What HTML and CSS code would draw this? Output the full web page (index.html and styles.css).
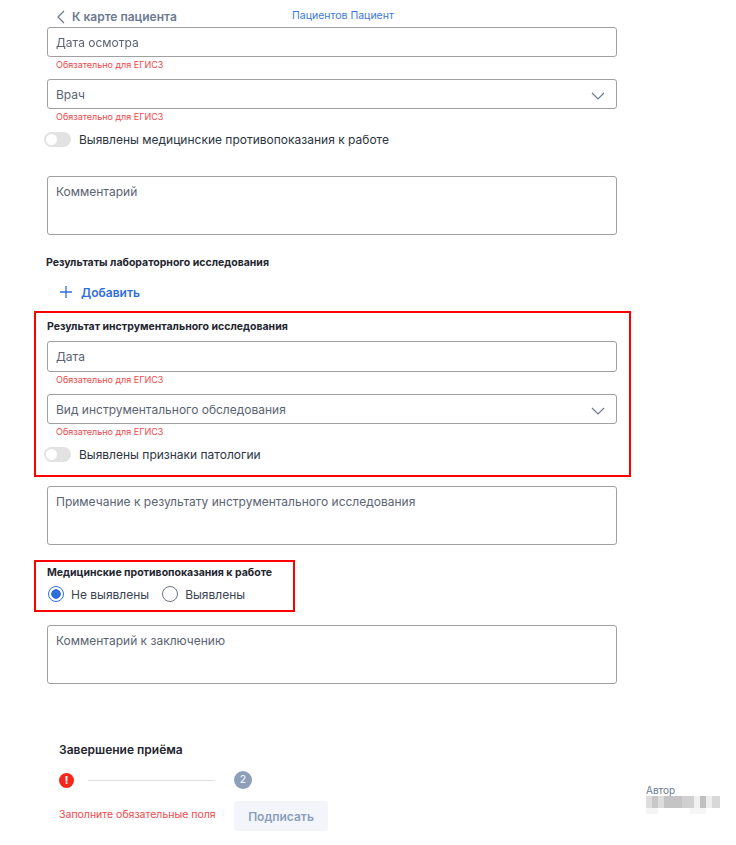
FILE: index.html
```html
<!DOCTYPE html>
<html lang="ru">
  <head>
    <meta charset="UTF-8" />
    <meta name="viewport" content="width=device-width, initial-scale=1.0" />
    <title>Осмотр</title>
    <link rel="stylesheet" href="styles.css">
  </head>
  <body>
    <header class="top-bar">
      <a class="back-link">
        <svg class="back-icon" width="10" height="14" viewBox="0 0 10 14"><path d="M8 1 2 7l6 6" fill="none" stroke="#6b7a90" stroke-width="1.3"/></svg>
        К карте пациента
      </a>
      <a class="patient-link">Пациентов Пациент</a>
    </header>

    <main class="form">
      <div class="field field-first">Дата осмотра</div>
      <p class="hint">Обязательно для ЕГИСЗ</p>

      <div class="field field-select">
        Врач
        <svg class="chevron" width="14" height="8" viewBox="0 0 14 8"><path d="M1 1l6 6 6-6" fill="none" stroke="#6b7a90" stroke-width="1.2"/></svg>
      </div>
      <p class="hint">Обязательно для ЕГИСЗ</p>

      <div class="toggle-row toggle-row-first">
        <span class="toggle"><span class="knob"></span></span>
        Выявлены медицинские противопоказания к работе
      </div>

      <div class="field field-area area-first">Комментарий</div>

      <h2 class="section-title title-lab">Результаты лабораторного исследования</h2>
      <a class="add-link">
        <svg width="14" height="14" viewBox="0 0 14 14"><path d="M7 1v12M1 7h12" fill="none" stroke="#2f6fdc" stroke-width="1.3"/></svg>
        Добавить
      </a>

      <section class="marked marked-instrument">
        <h2 class="section-title">Результат инструментального исследования</h2>
        <div class="field field-date">Дата</div>
        <p class="hint">Обязательно для ЕГИСЗ</p>
        <div class="field field-select">
          Вид инструментального обследования
          <svg class="chevron" width="14" height="8" viewBox="0 0 14 8"><path d="M1 1l6 6 6-6" fill="none" stroke="#6b7a90" stroke-width="1.2"/></svg>
        </div>
        <p class="hint">Обязательно для ЕГИСЗ</p>
        <div class="toggle-row">
          <span class="toggle"><span class="knob"></span></span>
          Выявлены признаки патологии
        </div>
      </section>

      <div class="field field-area area-note">Примечание к результату инструментального исследования</div>

      <section class="marked marked-radio">
        <h2 class="section-title">Медицинские противопоказания к работе</h2>
        <div class="radio-row">
          <span class="radio radio-on"></span>
          <span class="radio-label">Не выявлены</span>
          <span class="radio"></span>
          <span class="radio-label">Выявлены</span>
        </div>
      </section>

      <div class="field field-area area-conclusion">Комментарий к заключению</div>
    </main>

    <footer class="finish">
      <div class="finish-main">
        <h3 class="finish-title">Завершение приёма</h3>
        <div class="finish-grid">
          <div class="steps">
            <span class="step-alert">!</span>
            <span class="step-line"></span>
          </div>
          <span class="step-num">2</span>
          <span class="error-text">Заполните обязательные поля</span>
          <button class="sign-btn">Подписать</button>
        </div>
      </div>
      <div class="author">
        <span class="author-label">Автор</span>
        <div class="author-blur"></div>
      </div>
    </footer>
  </body>
</html>
```

FILE: styles.css
```css
* {
  box-sizing: border-box;
}
body {
  margin: 0;
  background: #fff;
  font-family: Inter, "Noto Sans", sans-serif;
  color: #2b3440;
  height: 845px;
  overflow: hidden;
}
.top-bar {
  position: fixed;
  top: 0;
  left: 0;
  width: 100%;
  height: 33px;
  background: #fff;
  display: flex;
  align-items: center;
  padding-left: 56px;
}
.back-link {
  display: flex;
  align-items: center;
  gap: 6px;
  width: 236px;
  font-size: 12px;
  font-weight: 600;
  color: #6b7a90;
}
.patient-link {
  font-size: 10.5px;
  color: #3c78d8;
  margin-top: -3px;
}
.form {
  width: 617px;
  margin-left: 47px;
  padding-top: 27px;
}
.field {
  position: relative;
  border: 1px solid #a0a0a0;
  border-radius: 3px;
  font-size: 12px;
  color: #5a6472;
  padding: 0 8px;
  height: 30px;
  display: flex;
  align-items: center;
  width: 570px;
}
.field-area {
  height: 59px;
  align-items: flex-start;
  padding-top: 7px;
}
.field-date {
  height: 31px;
}
.chevron {
  position: absolute;
  right: 11px;
  top: 12px;
}
.hint {
  margin: 2px 0 0 9px;
  height: 20px;
  font-size: 9px;
  line-height: 12px;
  color: #f0484a;
}
.toggle-row {
  display: flex;
  align-items: center;
  gap: 8px;
  margin-left: -3px;
  font-size: 12px;
  color: #2b3440;
  height: 16px;
}
.toggle {
  width: 27px;
  height: 15px;
  border-radius: 8px;
  background: #e2e2e2;
  padding: 2px;
  display: block;
}
.knob {
  display: block;
  width: 11px;
  height: 11px;
  border-radius: 50%;
  background: #fff;
}
.area-first {
  margin-top: 29px;
}
.section-title {
  margin: 0;
  font-size: 10.5px;
  line-height: 14px;
  font-weight: 700;
  color: #1f2630;
}
.title-lab {
  margin-top: 21px;
  margin-left: -1px;
}
.add-link {
  display: flex;
  align-items: center;
  gap: 8px;
  margin: 14px 0 0 12px;
  height: 16px;
  font-size: 12px;
  font-weight: 600;
  color: #2f6fdc;
}
.marked {
  border: 2px solid #f00;
  margin-left: -13px;
}
.marked-instrument {
  width: 597px;
  margin-top: 11px;
  height: 166px;
  padding: 7px 0 0 11px;
}
.marked-instrument .section-title {
  margin-bottom: 7px;
}
.area-note {
  margin-top: 9px;
}
.marked-radio {
  width: 261px;
  height: 52px;
  margin-top: 15px;
  padding: 4px 0 0 11px;
}
.radio-row {
  display: flex;
  align-items: center;
  margin-top: 6px;
  font-size: 12px;
  color: #3a4350;
}
.radio {
  width: 16px;
  height: 16px;
  border-radius: 50%;
  border: 1.5px solid #6c7280;
  margin-right: 7px;
}
.radio-on {
  border-color: #2f6fdc;
  background: radial-gradient(circle, #2f6fdc 0 4.5px, #fff 5px);
  margin-left: 1px;
}
.radio-label {
  margin-right: 13px;
}
.area-conclusion {
  margin-top: 13px;
}
.finish {
  display: flex;
  padding: 58px 0 0 59px;
}
.finish-main {
  width: 587px;
}
.finish-title {
  margin: 0;
  font-size: 12px;
  line-height: 16px;
  font-weight: 600;
  color: #1f2630;
}
.finish-grid {
  display: grid;
  grid-template-columns: 175px auto;
  grid-template-rows: 18px 30px;
  row-gap: 12px;
  margin-top: 13px;
  justify-items: start;
  align-items: center;
}
.steps {
  display: flex;
  align-items: center;
  gap: 14px;
}
.step-alert {
  width: 15px;
  height: 15px;
  border-radius: 50%;
  background: #f5261c;
  color: #fff;
  font-size: 10px;
  font-weight: 800;
  line-height: 15px;
  text-align: center;
}
.step-line {
  width: 127px;
  height: 1px;
  background: #dcdfe3;
}
.step-num {
  width: 18px;
  height: 18px;
  border-radius: 50%;
  background: #8c9fbb;
  color: #fff;
  font-size: 10.5px;
  line-height: 18px;
  text-align: center;
}
.error-text {
  font-size: 10.5px;
  color: #f0484a;
  margin-top: -4px;
}
.sign-btn {
  width: 94px;
  height: 30px;
  border: 0;
  border-radius: 3px;
  background: #f2f5fa;
  color: #8c9fbb;
  font-family: inherit;
  font-size: 12px;
  font-weight: 600;
}
.author {
  padding-top: 42px;
}
.author-label {
  display: block;
  font-size: 10px;
  line-height: 12px;
  color: #6b7a90;
}
.author-blur {
  width: 74px;
  height: 18px;
  background:
    linear-gradient(to right, #ddd 0 6px, #c8c8c8 6px 12px, #ddd 12px 18px, #c4c4c4 18px 36px, #d0d0d0 36px 48px, #f0f0f0 48px 54px, #c0c0c0 54px 60px, #eee 60px 66px, #d8d8d8 66px 74px) top / 100% 12px no-repeat,
    linear-gradient(to right, #f5f5f5 0 12px, #fff 12px 44px, #f6f6f6 44px 60px, #fff 60px) bottom / 100% 6px no-repeat;
}
```
